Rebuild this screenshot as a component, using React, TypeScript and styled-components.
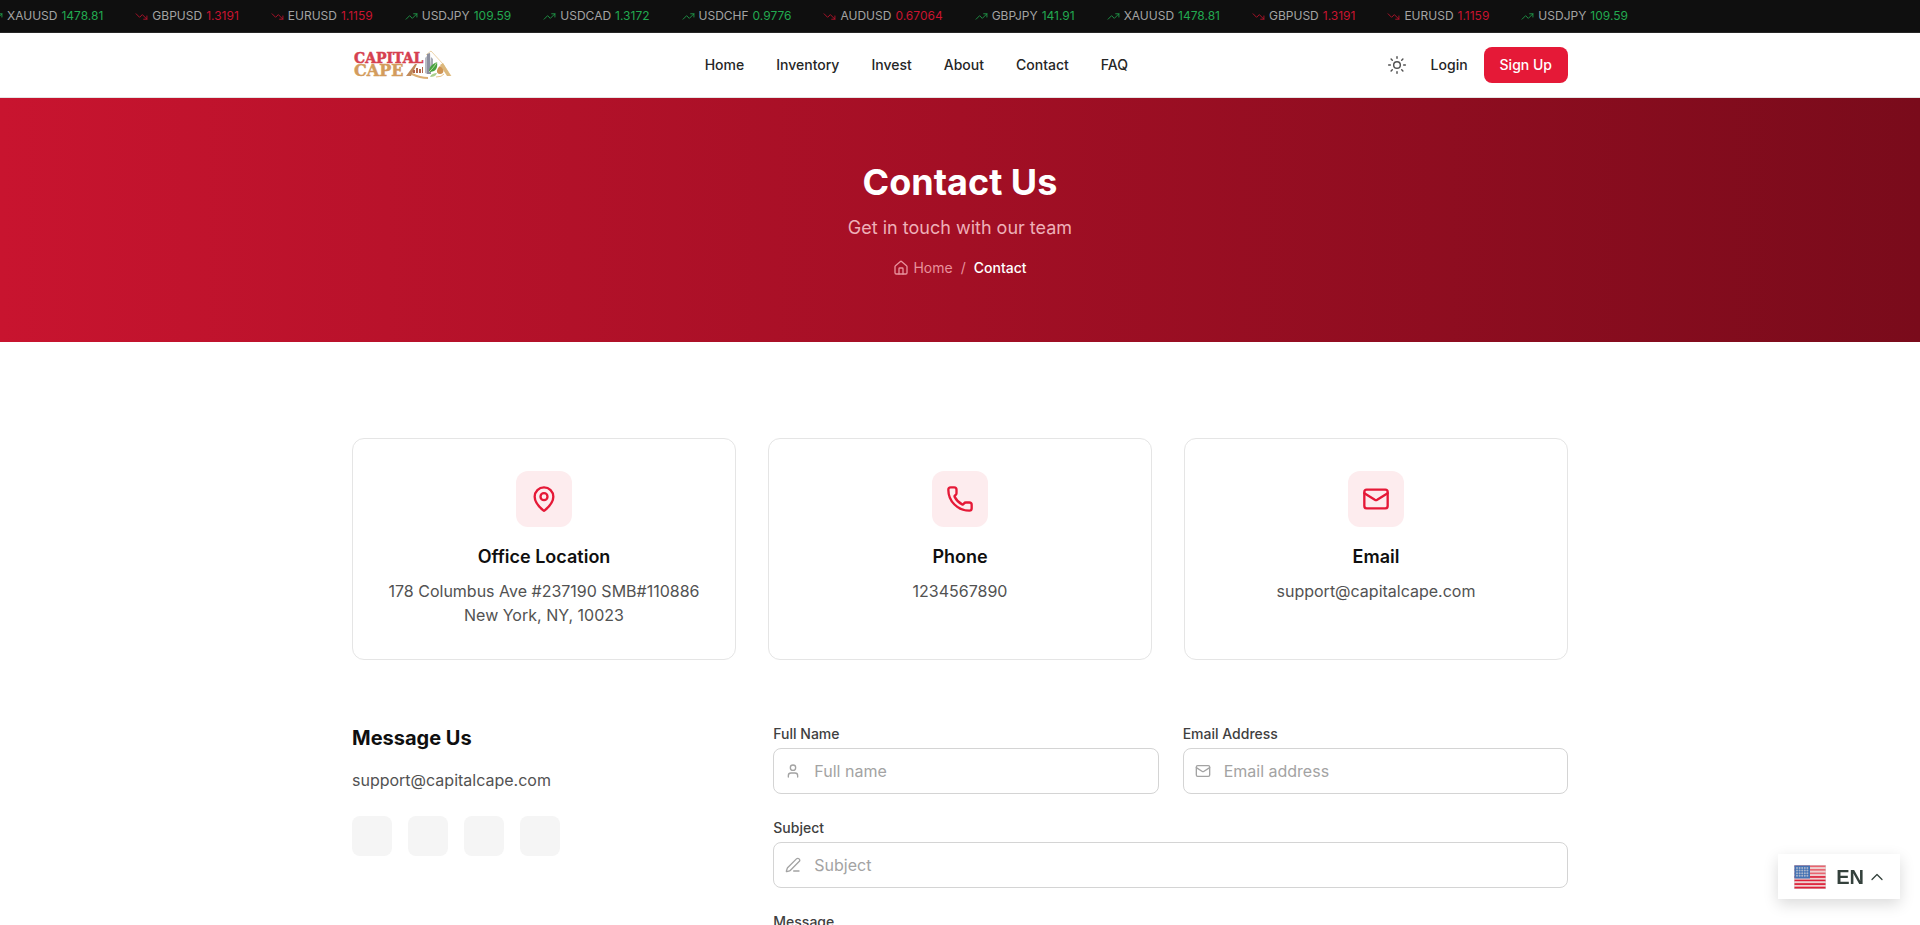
import React from "react";
import styled, { createGlobalStyle } from "styled-components";
import {
  ChevronUp,
  House,
  Mail,
  MapPin,
  PenLine,
  Phone,
  Sun,
  TrendingDown,
  TrendingUp,
  User,
} from "lucide-react";

const GlobalStyle = createGlobalStyle`
  *, *::before, *::after { box-sizing: border-box; }
  body {
    margin: 0;
    background: #ffffff;
    color: #404040;
    font-family: Inter, "Liberation Sans", sans-serif;
    font-size: 16px;
    line-height: 24px;
  }
  h1, h2, h3, p, ul, ol { margin: 0; padding: 0; }
  ul, ol { list-style: none; }
  a { color: inherit; text-decoration: none; }
  button, input, textarea { font: inherit; }
  svg { flex: none; display: block; }
`;

const Container = styled.div`
  width: 100%;
  max-width: 1280px;
  margin: 0 auto;
  padding: 0 32px;
`;

const Ticker = styled.div`
  overflow: hidden;
  background: #0f0f0f;
  border-bottom: 1px solid #262626;
`;

const TickerTrack = styled.ul`
  display: flex;
  gap: 32px;
  margin-left: -10px;
  padding: 8px 0;
  font-size: 12px;
  line-height: 16px;
  white-space: nowrap;
`;

const Quote = styled.li<{ $up: boolean }>`
  display: flex;
  align-items: center;
  gap: 4px;
  color: ${(p) => (p.$up ? "#22a94f" : "#c8142f")};
`;

const Pair = styled.span`
  color: #a3a3a3;
`;

const Header = styled.header`
  background: #ffffff;
  border-bottom: 1px solid #e5e5e5;
`;

const HeaderRow = styled(Container)`
  display: flex;
  align-items: center;
  justify-content: space-between;
  height: 64px;
`;

const Nav = styled.nav`
  display: flex;
  gap: 32px;
`;

const NavLink = styled.a`
  font-size: 14px;
  line-height: 20px;
  font-weight: 500;
  color: #262626;
`;

const Actions = styled.div`
  display: flex;
  align-items: center;
  gap: 16px;
`;

const IconButton = styled.button`
  display: flex;
  padding: 8px;
  border: 0;
  border-radius: 8px;
  background: transparent;
  color: #525252;
  cursor: pointer;
`;

const PrimaryLink = styled(NavLink)`
  padding: 8px 16px;
  border-radius: 8px;
  background: #e51937;
  color: #ffffff;
`;

const Hero = styled.section`
  padding: 64px 0;
  background: linear-gradient(to right, #c8142f, #a30f25, #7a0b1b);
  text-align: center;
`;

const HeroTitle = styled.h1`
  font-size: 36px;
  line-height: 40px;
  font-weight: 700;
  color: #ffffff;
`;

const HeroText = styled.p`
  margin-top: 12px;
  font-size: 18px;
  line-height: 28px;
  color: #eeb0b8;
`;

const Breadcrumb = styled.ol`
  display: flex;
  justify-content: center;
  gap: 8px;
  margin-top: 16px;
  font-size: 14px;
  line-height: 20px;
  color: #e8919c;
`;

const Crumb = styled.li<{ $current?: boolean }>`
  color: ${(p) => (p.$current ? "#ffffff" : "inherit")};
  font-weight: ${(p) => (p.$current ? 500 : 400)};
`;

const CrumbLink = styled.a`
  display: flex;
  align-items: center;
  gap: 4px;
`;

const Content = styled(Container)`
  padding-top: 96px;
  padding-bottom: 96px;
`;

const Cards = styled.div`
  display: grid;
  grid-template-columns: repeat(3, 1fr);
  gap: 32px;
`;

const Card = styled.article`
  display: flex;
  flex-direction: column;
  align-items: center;
  padding: 32px;
  border: 1px solid #e5e5e5;
  border-radius: 12px;
  text-align: center;
`;

const CardIcon = styled.div`
  display: flex;
  align-items: center;
  justify-content: center;
  width: 56px;
  height: 56px;
  border-radius: 12px;
  background: #fdecee;
  color: #e51937;
`;

const CardTitle = styled.h3`
  margin-top: 16px;
  font-size: 18px;
  line-height: 28px;
  font-weight: 600;
  color: #0f0f0f;
`;

const CardText = styled.p`
  margin-top: 8px;
  color: #525252;
`;

const Lower = styled.div`
  display: grid;
  grid-template-columns: repeat(3, 1fr);
  gap: 48px;
  margin-top: 64px;
`;

const SideTitle = styled.h2`
  font-size: 20px;
  line-height: 28px;
  font-weight: 700;
  color: #0f0f0f;
`;

const SideText = styled.p`
  margin-top: 16px;
  color: #525252;
`;

const SocialList = styled.ul`
  display: flex;
  gap: 16px;
  margin-top: 24px;
`;

const SocialLink = styled.a`
  display: block;
  width: 40px;
  height: 40px;
  border-radius: 8px;
  background: #f5f5f5;
`;

const Form = styled.form`
  grid-column: span 2;
  display: grid;
  grid-template-columns: repeat(2, 1fr);
  gap: 24px;
`;

const Field = styled.div<{ $wide?: boolean }>`
  display: flex;
  flex-direction: column;
  gap: 4px;
  grid-column: ${(p) => (p.$wide ? "1 / -1" : "auto")};
`;

const Label = styled.label`
  font-size: 14px;
  line-height: 20px;
  font-weight: 500;
  color: #404040;
`;

const Control = styled.div`
  display: flex;
  align-items: center;
  gap: 13px;
  padding: 10px 11px;
  border: 1px solid #d4d4d4;
  border-radius: 8px;
  color: #a3a3a3;
`;

const Input = styled.input`
  flex: 1;
  min-width: 0;
  height: 24px;
  padding: 0;
  border: 0;
  outline: 0;
  background: transparent;
  color: #171717;
  &::placeholder { color: #a3a3a3; }
`;

const TextArea = styled.textarea`
  padding: 10px 11px;
  border: 1px solid #d4d4d4;
  border-radius: 8px;
  outline: 0;
  resize: vertical;
  &::placeholder { color: #a3a3a3; }
`;

const LanguageButton = styled.button`
  position: fixed;
  right: 20px;
  bottom: 26px;
  display: flex;
  align-items: center;
  padding: 11px 13px 10px 16px;
  border: 0;
  background: #ffffff;
  box-shadow: 0 5px 15px rgba(0, 0, 0, 0.15);
  color: #34413c;
  cursor: pointer;
`;

const LanguageCode = styled.span`
  margin: 0 3px 0 10px;
  font-family: "Liberation Sans", Arial, sans-serif;
  font-size: 20px;
  line-height: 24px;
  font-weight: 700;
`;

const quotes = [
  { pair: "XAUUSD", price: "1478.81", up: true },
  { pair: "GBPUSD", price: "1.3191", up: false },
  { pair: "EURUSD", price: "1.1159", up: false },
  { pair: "USDJPY", price: "109.59", up: true },
  { pair: "USDCAD", price: "1.3172", up: true },
  { pair: "USDCHF", price: "0.9776", up: true },
  { pair: "AUDUSD", price: "0.67064", up: false },
  { pair: "GBPJPY", price: "141.91", up: true },
];

const tape = [...quotes, ...quotes.slice(0, 4)];

const links = ["Home", "Inventory", "Invest", "About", "Contact", "FAQ"];

const cards = [
  {
    title: "Office Location",
    lines: ["178 Columbus Ave #237190 SMB#110886", "New York, NY, 10023"],
    Icon: MapPin,
  },
  { title: "Phone", lines: ["1234567890"], Icon: Phone },
  { title: "Email", lines: ["support@capitalcape.com"], Icon: Mail },
];

const fields = [
  { id: "name", label: "Full Name", hint: "Full name", type: "text", Icon: User, wide: false },
  { id: "email", label: "Email Address", hint: "Email address", type: "email", Icon: Mail, wide: false },
  { id: "subject", label: "Subject", hint: "Subject", type: "text", Icon: PenLine, wide: true },
];

function Logo() {
  return (
    <svg width="102" height="32" viewBox="0 0 102 32" role="img" aria-label="Capital Cape">
      <g fontFamily='"DejaVu Serif", serif' fontWeight="700" strokeWidth="0.5">
        <text x="2" y="14" fontSize="14" fill="#d6404f" stroke="#d6404f">CAPITAL</text>
        <text x="2" y="27" fontSize="16" fill="#d39c5c" stroke="#d39c5c">CAPE</text>
      </g>
      {/* gold roof over the skyline */}
      <path d="M74 6 79 2 91 15 99 27" fill="none" stroke="#ecd3a8" strokeWidth="1" />
      <path d="M54 27 63 15 65 15 59 27Z" fill="#c08a5a" />
      <path d="M91 14 99 27 95 27 88 16Z" fill="#dcb87c" />
      <path d="M61 21h2v3h-2zM64 19h2v5h-2zM67 20h2v4h-2zM70 18h1v6h-1z" fill="#b2664a" />
      <path d="M60 25q8 4 16 4" fill="none" stroke="#dcae72" strokeWidth="2" />
      {/* towers */}
      <path d="M73 9 75 7 75 25 73 24Z" fill="#b9bcc4" />
      <path d="M75 5 78 4 79 25 75 25Z" fill="#8d90a0" />
      <path d="M79 8 81 10 81 18 79 20Z" fill="#a9acb5" />
      {/* leaves */}
      <path d="M77 23C77 17 81 15 85 13C86 19 84 23 77 23Z" fill="#48a33f" />
      <path d="M77 23C80 20 82 18 85 13" fill="none" stroke="#b9dba6" strokeWidth="1" />
      <path d="M78 28C79 25 82 24 85 24C84 27 81 28 78 28Z" fill="#a9cf8c" />
      {/* money bag */}
      <path d="M88 17C92 19 93 25 88 25C83 25 85 19 88 17Z" fill="#cf9453" />
      <path d="M84 28q6 0 8-3" fill="none" stroke="#e7c690" strokeWidth="1" />
    </svg>
  );
}

function Flag() {
  const stripes = Array.from({ length: 13 }, (_, i) => i);
  const stars = Array.from({ length: 20 }, (_, i) => i);
  return (
    <svg width="32" height="24" viewBox="0 0 32 24" aria-hidden="true">
      <rect x="0" y="0" width="32" height="24" fill="#d5d5d5" />
      {stripes.map((i) => (
        <rect
          key={i}
          x="0.5"
          y={0.5 + i * 1.77}
          width="31"
          height="1.77"
          fill={i % 2 ? "#f1cfcf" : i < 6 ? "#ea6470" : "#df2038"}
        />
      ))}
      <rect x="0.5" y="0.5" width="15.5" height="13" fill="#4472b4" />
      {stars.map((i) => (
        <circle key={i} cx={3 + (i % 5) * 2.6} cy={3 + Math.floor(i / 5) * 2.6} r="1" fill="#aab6cc" />
      ))}
    </svg>
  );
}

export default function App() {
  return (
    <>
      <GlobalStyle />
      <Ticker>
        <TickerTrack>
          {tape.map((q, i) => (
            <Quote key={i} $up={q.up}>
              {q.up ? <TrendingUp size={13} strokeWidth={1.5} /> : <TrendingDown size={13} strokeWidth={1.5} />}
              <Pair>{q.pair}</Pair>
              <span>{q.price}</span>
            </Quote>
          ))}
        </TickerTrack>
      </Ticker>

      <Header>
        <HeaderRow>
          <a href="#home"><Logo /></a>
          <Nav aria-label="Main">
            {links.map((l) => (
              <NavLink key={l} href={`#${l.toLowerCase()}`}>{l}</NavLink>
            ))}
          </Nav>
          <Actions>
            <IconButton type="button" aria-label="Toggle theme">
              <Sun size={20} strokeWidth={1.75} />
            </IconButton>
            <NavLink href="#login">Login</NavLink>
            <PrimaryLink href="#signup">Sign Up</PrimaryLink>
          </Actions>
        </HeaderRow>
      </Header>

      <main>
        <Hero>
          <HeroTitle>Contact Us</HeroTitle>
          <HeroText>Get in touch with our team</HeroText>
          <Breadcrumb aria-label="Breadcrumb">
            <Crumb>
              <CrumbLink href="#home">
                <House size={16} strokeWidth={2} />
                Home
              </CrumbLink>
            </Crumb>
            <Crumb aria-hidden="true">/</Crumb>
            <Crumb $current aria-current="page">Contact</Crumb>
          </Breadcrumb>
        </Hero>

        <Content>
          <Cards>
            {cards.map(({ title, lines, Icon }) => (
              <Card key={title}>
                <CardIcon><Icon size={28} strokeWidth={2} /></CardIcon>
                <CardTitle>{title}</CardTitle>
                <CardText>
                  {lines.map((line, i) => (
                    <React.Fragment key={line}>
                      {i > 0 && <br />}
                      {line}
                    </React.Fragment>
                  ))}
                </CardText>
              </Card>
            ))}
          </Cards>

          <Lower>
            <div>
              <SideTitle>Message Us</SideTitle>
              <SideText>support@capitalcape.com</SideText>
              <SocialList>
                {["Facebook", "Twitter", "Instagram", "LinkedIn"].map((s) => (
                  <li key={s}><SocialLink href={`#${s.toLowerCase()}`} aria-label={s} /></li>
                ))}
              </SocialList>
            </div>
            <Form>
              {fields.map(({ id, label, hint, type, Icon, wide }) => (
                <Field key={id} $wide={wide}>
                  <Label htmlFor={id}>{label}</Label>
                  <Control>
                    <Icon size={16} strokeWidth={2} />
                    <Input id={id} type={type} placeholder={hint} />
                  </Control>
                </Field>
              ))}
              <Field $wide>
                <Label htmlFor="message">Message</Label>
                <TextArea id="message" rows={5} />
              </Field>
            </Form>
          </Lower>
        </Content>
      </main>

      <LanguageButton type="button" aria-label="Language: EN">
        <Flag />
        <LanguageCode>EN</LanguageCode>
        <ChevronUp size={20} strokeWidth={1.5} />
      </LanguageButton>
    </>
  );
}
